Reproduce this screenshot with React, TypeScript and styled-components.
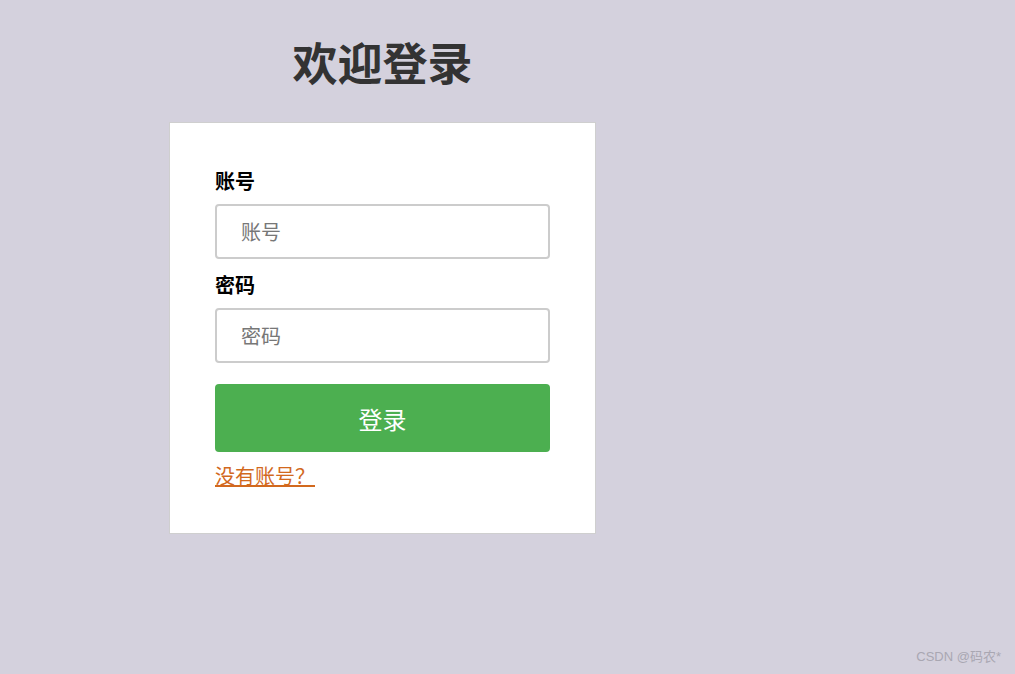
import React from "react";
import styled, { createGlobalStyle } from "styled-components";

const GlobalStyle = createGlobalStyle`
  html, body {
    margin: 0;
    padding: 0;
    background: #d4d1dd;
    font-family: "Microsoft YaHei", "Noto Sans CJK SC", "Noto Sans", sans-serif;
  }
  #root {
    min-height: 674px;
  }
`;

const Page = styled.div`
  position: relative;
  min-height: 674px;
  padding-left: 169px;
  box-sizing: border-box;
`;

const Column = styled.div`
  width: 427px;
  display: flex;
  flex-direction: column;
  align-items: stretch;
`;

const Title = styled.h1`
  margin: 35px 0 33px;
  font-size: 45px;
  line-height: 54px;
  font-weight: 700;
  color: #333333;
  text-align: center;
`;

const Card = styled.form`
  background: #ffffff;
  border: 1px solid #cfcfcf;
  padding: 46px 45px 45px;
  display: flex;
  flex-direction: column;
`;

const Label = styled.label`
  display: block;
  font-size: 20px;
  line-height: 24px;
  font-weight: 700;
  color: #000000;
  margin-bottom: 11px;
`;

const Input = styled.input`
  box-sizing: border-box;
  width: 100%;
  height: 55px;
  border: 2px solid #cccccc;
  border-radius: 4px;
  padding: 0 24px;
  font-size: 20px;
  font-family: inherit;
  color: #333;
  outline: none;
  margin-bottom: ${(p: { $gap: number }) => p.$gap}px;
  &::placeholder {
    color: #777777;
  }
`;

const Button = styled.button`
  height: 68px;
  border: none;
  border-radius: 4px;
  background: #4caf50;
  color: #ffffff;
  font-size: 24px;
  font-family: inherit;
  cursor: pointer;
  margin-bottom: 12px;
`;

const Link = styled.a`
  align-self: flex-start;
  font-size: 20px;
  line-height: 24px;
  color: #d2691e;
  text-decoration: underline;
`;

const Watermark = styled.div`
  position: absolute;
  right: 14px;
  bottom: 9px;
  font-size: 13px;
  color: #a9a7b2;
  font-family: "Liberation Sans", "Noto Sans CJK SC", sans-serif;
`;

export default function App() {
  return (
    <>
      <GlobalStyle />
      <Page>
        <Column>
          <Title>欢迎登录</Title>
          <Card onSubmit={(e) => e.preventDefault()}>
            <Label htmlFor="account">账号</Label>
            <Input id="account" placeholder="账号" $gap={14} />
            <Label htmlFor="password">密码</Label>
            <Input id="password" type="password" placeholder="密码" $gap={21} />
            <Button type="submit">登录</Button>
            <Link href="#">没有账号？</Link>
          </Card>
        </Column>
        <Watermark>CSDN @码农*</Watermark>
      </Page>
    </>
  );
}
